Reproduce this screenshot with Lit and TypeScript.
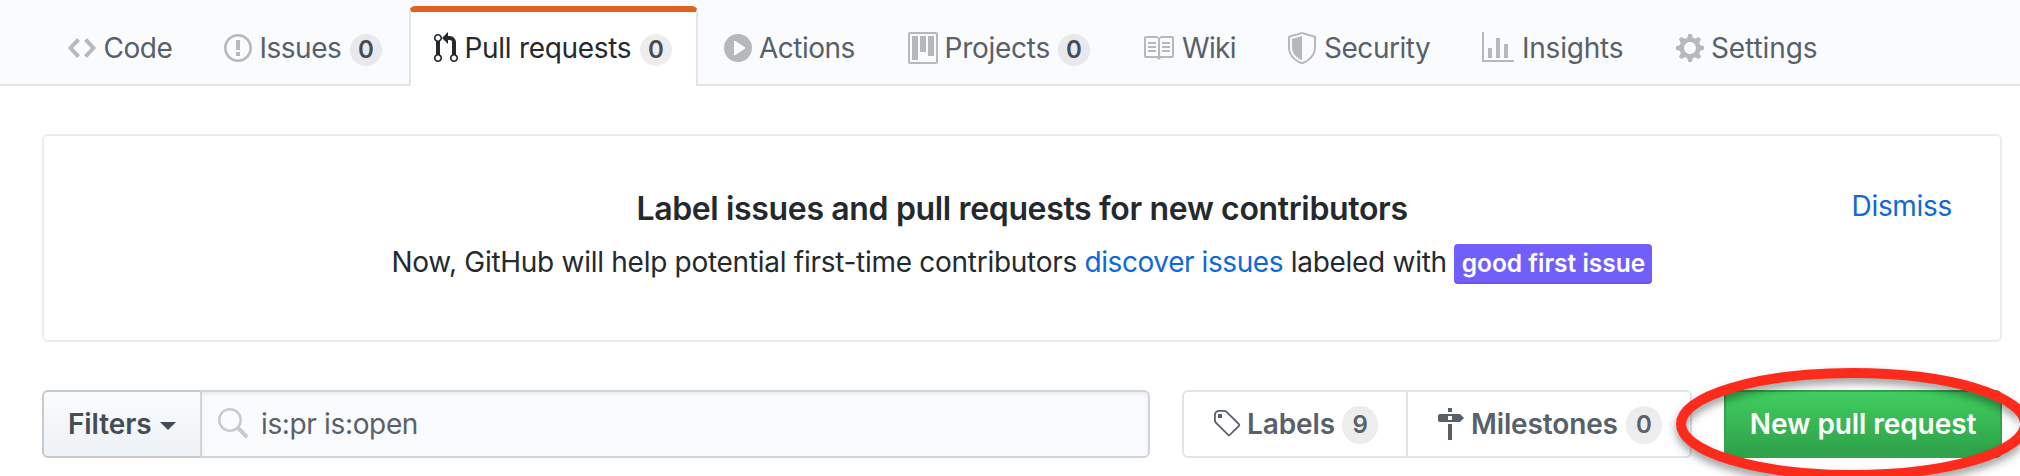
import { LitElement, html, css, svg, nothing } from "lit";
import { customElement, property } from "lit/decorators.js";
import { classMap } from "lit/directives/class-map.js";
import { styleMap } from "lit/directives/style-map.js";

interface Icon {
  w: number;
  d: string;
}

const ICONS: Record<string, Icon> = {
  code: { w: 14, d: "M9.5 3L8 4.5 11.5 8 8 11.5 9.5 13 14 8 9.5 3zm-5 0L0 8l4.5 5L6 11.5 2.5 8 6 4.5 4.5 3z" },
  issue: { w: 14, d: "M7 2.3c3.14 0 5.7 2.56 5.7 5.7s-2.56 5.7-5.7 5.7A5.71 5.71 0 0 1 1.3 8c0-3.14 2.56-5.7 5.7-5.7zM7 1C3.14 1 0 4.14 0 8s3.14 7 7 7 7-3.14 7-7-3.14-7-7-7zm1 3H6v5h2V4zm0 6H6v2h2v-2z" },
  pull: { w: 12, d: "M11 11.28V5c-.03-.78-.34-1.47-.94-2.06C9.46 2.35 8.78 2.03 8 2H7V0L4 3l3 3V4h1c.27.02.48.11.69.31.21.2.3.42.31.69v6.28A1.993 1.993 0 0 0 10 15a1.993 1.993 0 0 0 1-3.72zm-1 2.92c-.66 0-1.2-.55-1.2-1.2 0-.65.55-1.2 1.2-1.2.65 0 1.2.55 1.2 1.2 0 .65-.55 1.2-1.2 1.2zM4 3c0-1.11-.89-2-2-2a1.993 1.993 0 0 0-1 3.72v6.56A1.993 1.993 0 0 0 2 15a1.993 1.993 0 0 0 1-3.72V4.72c.59-.34 1-.98 1-1.72zm-.8 10c0 .66-.55 1.2-1.2 1.2-.65 0-1.2-.55-1.2-1.2 0-.65.55-1.2 1.2-1.2.65 0 1.2.55 1.2 1.2zM2 4.2C1.34 4.2.8 3.65.8 3c0-.65.55-1.2 1.2-1.2.65 0 1.2.55 1.2 1.2 0 .65-.55 1.2-1.2 1.2z" },
  play: { w: 14, d: "M14 8A7 7 0 1 1 0 8a7 7 0 0 1 14 0zm-8.223 3.482l4.599-3.066a.5.5 0 0 0 0-.832L5.777 4.518A.5.5 0 0 0 5 4.934v6.132a.5.5 0 0 0 .777.416z" },
  project: { w: 15, d: "M10 12h3V2h-3v10zm-4-2h3V2H6v8zm-4 4h3V2H2v12zm-1 1h13V1H1v14zM14 0H1a1 1 0 0 0-1 1v14a1 1 0 0 0 1 1h13a1 1 0 0 0 1-1V1a1 1 0 0 0-1-1z" },
  book: { w: 16, d: "M3 5h4v1H3V5zm0 3h4V7H3v1zm0 2h4V9H3v1zm11-5h-4v1h4V5zm0 2h-4v1h4V7zm0 2h-4v1h4V9zm2-6v9c0 .55-.45 1-1 1H9.5l-1 1-1-1H2c-.55 0-1-.45-1-1V3c0-.55.45-1 1-1h5.5l1 1 1-1H15c.55 0 1 .45 1 1zm-8 .5L7.5 3H2v9h6V3.5zm7-.5H9.5l-.5.5V12h6V3z" },
  shield: { w: 14, d: "M0 2l7-2 7 2v6.02C14 12.69 8.69 16 7 16c-1.69 0-7-3.31-7-7.98V2zm1 .75L7 1l6 1.75v5.268C13 12.104 8.449 15 7 15c-1.449 0-6-2.896-6-6.982V2.75zm1 .75L7 2v12c-1.207 0-5-2.482-5-5.985V3.5z" },
  graph: { w: 16, d: "M16 14v1H0V0h1v14h15zM5 13H3V8h2v5zm4 0H7V3h2v10zm4 0h-2V6h2v7z" },
  gear: { w: 14, d: "M14 8.77v-1.6l-1.94-.64-.45-1.09.88-1.84-1.13-1.13-1.81.91-1.09-.45-.69-1.92h-1.6l-.63 1.94-1.11.45-1.84-.88-1.13 1.13.91 1.81-.45 1.09L0 7.23v1.59l1.94.64.45 1.09-.88 1.84 1.13 1.13 1.81-.91 1.09.45.69 1.92h1.59l.63-1.94 1.11-.45 1.84.88 1.13-1.13-.92-1.81.47-1.09L14 8.75v.02zM7 11c-1.66 0-3-1.34-3-3s1.34-3 3-3 3 1.34 3 3-1.34 3-3 3z" },
  search: { w: 16, d: "M15.7 13.3l-3.81-3.83A5.93 5.93 0 0 0 13 6c0-3.31-2.69-6-6-6S1 2.69 1 6s2.69 6 6 6c1.3 0 2.48-.41 3.47-1.11l3.83 3.81c.19.2.45.3.7.3.25 0 .52-.09.7-.3a.996.996 0 0 0 0-1.41v.01zM7 10.7c-2.59 0-4.7-2.11-4.7-4.7 0-2.59 2.11-4.7 4.7-4.7 2.59 0 4.7 2.11 4.7 4.7 0 2.59-2.11 4.7-4.7 4.7z" },
  tag: { w: 14, d: "M7.73 1.73C7.26 1.26 6.62 1 5.96 1H3.5C2.13 1 1 2.13 1 3.5v2.47c0 .66.27 1.3.73 1.77l6.06 6.06c.39.39 1.02.39 1.41 0l4.59-4.59a.996.996 0 0 0 0-1.41L7.73 1.73zM2.38 7.09c-.31-.3-.47-.7-.47-1.13V3.5c0-.88.72-1.59 1.59-1.59h2.47c.42 0 .83.16 1.13.47l6.14 6.13-4.73 4.73-6.13-6.15zM3.01 3h2v2H3V3h.01z" },
  milestone: { w: 14, d: "M8 2H6V0h2v2zm4 5H2c-.55 0-1-.45-1-1V4c0-.55.45-1 1-1h10l2 2-2 2zM8 4H6v2h2V4zM6 16h2V8H6v8z" },
};

@customElement("octo-icon")
class OctoIcon extends LitElement {
  static styles = css`
    :host { display: block; flex: none; }
    .glyph { display: block; fill: currentColor; overflow: visible; }
  `;
  @property() name = "code";
  render() {
    const icon = ICONS[this.name];
    return html`<svg class="glyph" width=${icon.w * 2} height="32" viewBox="0 0 ${icon.w} 16">
      ${svg`<path fill-rule="evenodd" d=${icon.d}></path>`}
    </svg>`;
  }
}

interface Tab {
  icon: string;
  label: string;
  width: number;
  gap: number;
  tracking: number;
  count?: number;
  after?: number;
  active?: boolean;
}

const TABS: Tab[] = [
  { icon: "code", label: "Code", width: 156, gap: 7.5, tracking: -0.5 },
  { icon: "issue", label: "Issues", width: 184.5, gap: 7.5, tracking: -0.5, count: 0, after: 26.5 },
  { icon: "pull", label: "Pull requests", width: 289, gap: 6.5, tracking: -0.3, count: 0, after: 23.5, active: true },
  { icon: "play", label: "Actions", width: 210.5, gap: 7, tracking: -0.5 },
  { icon: "project", label: "Projects", width: 234, gap: 6.5, tracking: -0.25, count: 0, after: 52 },
  { icon: "book", label: "Wiki", width: 146, gap: 8, tracking: -0.7 },
  { icon: "shield", label: "Security", width: 194, gap: 8, tracking: -0.46 },
  { icon: "graph", label: "Insights", width: 194, gap: 8, tracking: -0.22 },
  { icon: "gear", label: "Settings", width: 160, gap: 7, tracking: -0.1 },
];

@customElement("app-root")
class AppRoot extends LitElement {
  static styles = css`
    :host {
      display: block;
      position: relative;
      height: 476px;
      overflow: hidden;
      background: #fff;
      color: #24292e;
      font: 400 28px/42px Inter, "Liberation Sans", sans-serif;
      white-space: nowrap;
    }
    * { box-sizing: border-box; }

    .tabs {
      display: flex;
      align-items: flex-end;
      height: 86px;
      padding: 6px 0 0 68px;
      background: #fafbfd;
      box-shadow: inset 0 -2px #e1e4e8;
    }
    .tab {
      display: flex;
      align-items: center;
      height: 80px;
      padding-top: 4px;
      color: #586069;
    }
    .tab octo-icon { color: #b6b8bb; }
    .active + .tab { padding-left: 26.5px; }
    .tab.active {
      padding: 0 0 2px 23.5px;
      border: solid #e1e4e8;
      border-width: 6px 2px 0;
      border-top-color: #e1621f;
      border-radius: 6px 6px 0 0;
      background: #fff;
      color: #24292e;
    }
    .active octo-icon { color: inherit; }
    .count {
      flex: none;
      width: 32px;
      margin: 4px 0 0 auto;
      border-radius: 20px;
      background: rgba(27, 31, 35, 0.08);
      color: #444d56;
      font-size: 24px;
      font-weight: 600;
      line-height: 32px;
      text-align: center;
    }

    .content { padding: 48px 18px 0 42px; }
    .notice {
      display: grid;
      grid-template-columns: 1fr auto 1fr;
      height: 208px;
      padding: 48px;
      border: 2px solid #eaecef;
      border-radius: 6px;
    }
    .message { grid-column: 2; padding-top: 1px; text-align: center; }
    .title {
      margin: 0 0 8px;
      font-size: 32px;
      font-weight: 600;
      line-height: 48px;
      letter-spacing: -0.35px;
    }
    .lead { margin: 0; letter-spacing: -0.28px; }
    .tail { letter-spacing: -0.28px; }
    .link { color: #1068d8; letter-spacing: -0.42px; }
    .dismiss { justify-self: end; padding-top: 1px; letter-spacing: -0.31px; }
    .badge {
      display: inline-block;
      width: 198px;
      height: 40px;
      border-radius: 4px;
      background: #725ffb;
      box-shadow: inset 0 -2px rgba(27, 31, 35, 0.12);
      color: #fff;
      font-size: 24.5px;
      font-weight: 600;
      line-height: 38px;
      letter-spacing: 0;
      text-align: center;
    }

    .toolbar { display: flex; height: 68px; margin-top: 48px; }
    .filters {
      display: flex;
      align-items: center;
      gap: 8px;
      width: 158px;
      padding-left: 24px;
      border: 2px solid #c7cacd;
      border-right: 0;
      border-radius: 6px 0 0 6px;
      background: linear-gradient(#fafbfd, #eff3f6 90%);
      color: #444d56;
      font-weight: 600;
      letter-spacing: -0.1px;
    }
    .caret {
      border: 8px solid transparent;
      border-top-color: currentColor;
      border-bottom: 0;
      margin-top: 4px;
    }
    .search {
      display: flex;
      align-items: center;
      gap: 13px;
      width: 950px;
      padding-left: 14px;
      border: 2px solid #d1d5da;
      border-radius: 0 6px 6px 0;
      background: #fafbfd;
      box-shadow: inset 0 2px 4px rgba(27, 31, 35, 0.075);
      color: #586069;
      letter-spacing: -0.35px;
    }
    .search octo-icon { color: #c6cbd1; }
    .subnav {
      display: flex;
      width: 510px;
      margin: 0 32px;
      border: 2px solid #e1e4e8;
      border-radius: 6px;
      color: #586069;
      font-weight: 600;
    }
    .sub { display: flex; align-items: center; padding: 0 28px; }
    .labels { width: 224px; border-right: 2px solid #e1e4e8; gap: 7px; letter-spacing: -0.1px; }
    .milestones { flex: 1; gap: 7px; letter-spacing: -0.13px; }
    .subnav .count {
      width: 36px;
      margin-top: 2px;
      color: #586069;
      line-height: 38px;
      letter-spacing: 0;
    }
    .create {
      width: 278px;
      padding: 0;
      border: 2px solid #33a44c;
      border-radius: 6px;
      background: linear-gradient(#40ce60, #30a44b 90%);
      color: #fff;
      font: inherit;
      font-weight: 600;
      letter-spacing: -0.08px;
    }

    .marker {
      position: absolute;
      top: 0;
      left: 0;
      pointer-events: none;
      filter: drop-shadow(0 5px 4px rgba(0, 0, 0, 0.4));
    }
  `;

  private tab(t: Tab) {
    return html`<a
      class=${classMap({ tab: true, active: !!t.active })}
      style=${styleMap({ width: `${t.width}px` })}
    >
      <octo-icon name=${t.icon}></octo-icon>
      <span style=${styleMap({ marginLeft: `${t.gap}px`, letterSpacing: `${t.tracking}px` })}>${t.label}</span>
      ${t.count === undefined
        ? nothing
        : html`<span class="count" style=${styleMap({ marginRight: `${t.after}px` })}>${t.count}</span>`}
    </a>`;
  }

  render() {
    return html`
      <nav class="tabs">${TABS.map((t) => this.tab(t))}</nav>
      <main class="content">
        <section class="notice">
          <div class="message">
            <h3 class="title">Label issues and pull requests for new contributors</h3>
            <p class="lead">Now, GitHub will help potential first-time contributors <a class="link">discover issues</a><span class="tail"> labeled with </span><span class="badge">good first issue</span></p>
          </div>
          <a class="link dismiss">Dismiss</a>
        </section>
        <div class="toolbar">
          <div class="filters">Filters<span class="caret"></span></div>
          <div class="search"><octo-icon name="search"></octo-icon>is:pr is:open</div>
          <div class="subnav">
            <a class="sub labels"><octo-icon name="tag"></octo-icon>Labels<span class="count">9</span></a>
            <a class="sub milestones"><octo-icon name="milestone"></octo-icon>Milestones<span class="count">0</span></a>
          </div>
          <button class="create">New pull request</button>
        </div>
      </main>
      <svg class="marker" width="2020" height="500" viewBox="0 0 2020 500">
        <ellipse cx="1853" cy="424" rx="172" ry="51" fill="none" stroke="#fd2b1c" stroke-width="10"></ellipse>
      </svg>
    `;
  }
}
